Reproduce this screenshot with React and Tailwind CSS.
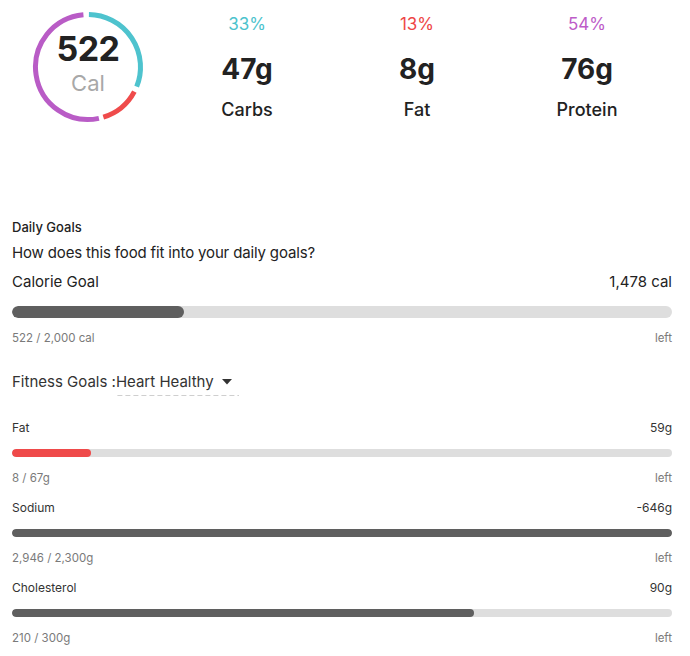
import React from 'react'

// ── Ring helpers ───────────────────────────────────────────────────────────────
const polar = (cx, cy, r, deg) => {
    const rad = ((deg - 90) * Math.PI) / 180
    return [cx + r * Math.cos(rad), cy + r * Math.sin(rad)]
}

const arc = (start, end, r = 52.5) => {
    const [x1, y1] = polar(56, 56, r, start)
    const [x2, y2] = polar(56, 56, r, end)
    const large = end - start > 180 ? 1 : 0
    return `M ${x1} ${y1} A ${r} ${r} 0 ${large} 1 ${x2} ${y2}`
}

const SEGMENTS = [
    { from: 1, to: 112, color: '#4ec3ce' },
    { from: 118, to: 163, color: '#ef4b4b' },
    { from: 168, to: 355, color: '#b95cc6' },
]

const MACROS = [
    { pct: '33%', value: '47g', label: 'Carbs', color: 'text-[#4cc3cd]' },
    { pct: '13%', value: '8g', label: 'Fat', color: 'text-[#ee4646]' },
    { pct: '54%', value: '76g', label: 'Protein', color: 'text-[#bd5bc8]' },
]

const GOALS = [
    { name: 'Fat', left: '59g', used: '8 / 67g', pct: 11.9, fill: 'bg-[#ef4a4a]' },
    { name: 'Sodium', left: '-646g', used: '2,946 / 2,300g', pct: 100, fill: 'bg-[#5f5f5f]' },
    { name: 'Cholesterol', left: '90g', used: '210 / 300g', pct: 70, fill: 'bg-[#5f5f5f]' },
]

// ── Calorie ring ───────────────────────────────────────────────────────────────
const Ring = () => (
    <div className="relative w-[112px] h-[112px] shrink-0">
        <svg width="112" height="112" viewBox="0 0 112 112" className="absolute inset-0">
            {SEGMENTS.map((s) => (
                <path key={s.from} d={arc(s.from, s.to)} fill="none" stroke={s.color} strokeWidth="5" />
            ))}
        </svg>
        <div className="absolute inset-0 flex flex-col items-center pt-[20px]">
            <span className="text-[34px] leading-[36px] font-bold text-[#222] tracking-[-0.5px]">522</span>
            <span className="mt-[3px] text-[22px] leading-[26px] text-[#a8a8a8]">Cal</span>
        </div>
    </div>
)

// ── Goal bar ───────────────────────────────────────────────────────────────────
const Bar = ({ pct, fill, h }) => (
    <div className={`w-full ${h} rounded-full bg-[#dedede] overflow-hidden`}>
        <div className={`h-full rounded-full ${fill}`} style={{ width: `${pct}%` }} />
    </div>
)

export default function App() {
    return (
        <div className="w-[690px] h-[656px] bg-white font-['Inter',sans-serif] text-[#222]">
            {/* ── Summary ─────────────────────────────────────────────── */}
            <div className="flex h-[219px] pt-[11px] pl-[32px]">
                <Ring />
                <div className="ml-[18px] grid grid-cols-3 w-[510px] h-fit">
                    {MACROS.map((m) => (
                        <div key={m.label} className="flex flex-col items-center">
                            <span className={`mt-[1px] text-[17px] leading-[24px] ${m.color}`}>{m.pct}</span>
                            <span className="mt-[17px] text-[28px] leading-[32px] font-bold text-[#222]">{m.value}</span>
                            <span className="mt-[13px] text-[18px] leading-[24px] font-medium text-[#222]">{m.label}</span>
                        </div>
                    ))}
                </div>
            </div>

            {/* ── Daily goals ─────────────────────────────────────────── */}
            <div className="pl-[12px] pr-[18px]">
                <p className="text-[13px] leading-[16px] font-medium">Daily Goals</p>
                <p className="mt-[8px] text-[15px] leading-[20px] tracking-[-0.15px]">How does this food fit into your daily goals?</p>
                <div className="mt-[9px] flex justify-between text-[15px] leading-[20px]">
                    <span>Calorie Goal</span>
                    <span>1,478 cal</span>
                </div>
                <div className="mt-[14px]">
                    <Bar pct={26.1} fill="bg-[#5f5f5f]" h="h-[12px]" />
                </div>
                <div className="mt-[12px] flex justify-between text-[11.5px] leading-[16px] text-[#7a7a7a]">
                    <span>522 / 2,000 cal</span>
                    <span>left</span>
                </div>

                <div className="mt-[26px] flex items-start text-[15px] leading-[20px] text-[#333]">
                    <span>Fitness Goals :</span>
                    <span className="flex items-center pb-[4px] pr-[7px] bg-[linear-gradient(to_right,#cfcfcf_5px,transparent_5px)] bg-[length:8px_1px] bg-repeat-x bg-bottom">
                        Heart Healthy
                        <svg width="10" height="6" viewBox="0 0 10 6" className="ml-[8px]">
                            <polygon points="0,0 10,0 5,5.5" fill="#333" />
                        </svg>
                    </span>
                </div>

                <div className="mt-[24px]">
                    {GOALS.map((g, i) => (
                        <div key={g.name} className={i ? 'mt-[14px]' : ''}>
                            <div className="flex justify-between text-[12px] leading-[16px] text-[#333]">
                                <span>{g.name}</span>
                                <span>{g.left}</span>
                            </div>
                            <div className="mt-[13px]">
                                <Bar pct={g.pct} fill={g.fill} h="h-[8px]" />
                            </div>
                            <div className="mt-[13px] flex justify-between text-[11.5px] leading-[16px] text-[#7a7a7a]">
                                <span>{g.used}</span>
                                <span>left</span>
                            </div>
                        </div>
                    ))}
                </div>
            </div>
        </div>
    )
}
